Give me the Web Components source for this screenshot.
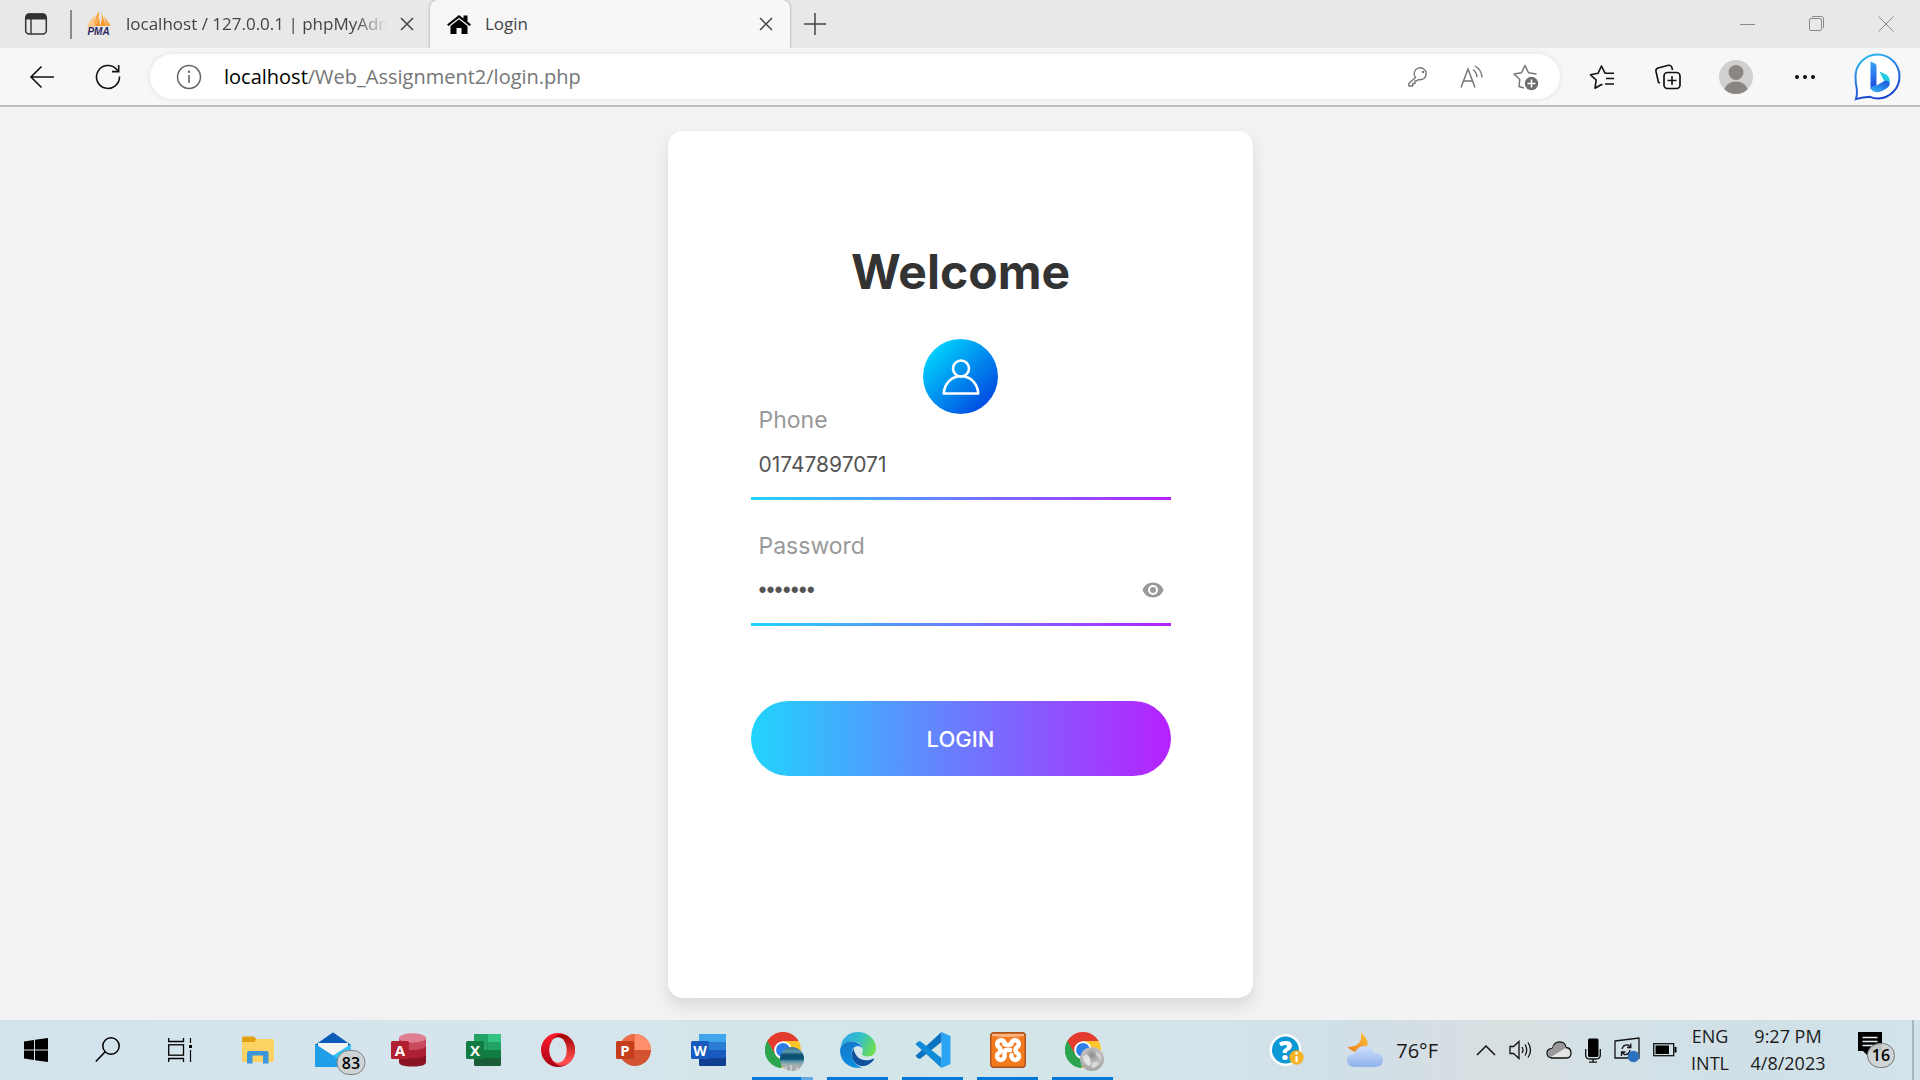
<!DOCTYPE html>
<html lang="en">
<head>
<meta charset="utf-8">
<title>Login</title>
<style>
  html, body { margin: 0; height: 100%; }
  body { font-family: "Open Sans", "Noto Sans", sans-serif; color: #1b1b1b; }
</style>
</head>
<body>
<desktop-screen></desktop-screen>

<script>
const define = (name, html) => {
  const tpl = document.createElement('template');
  tpl.innerHTML = html;
  customElements.define(name, class extends HTMLElement {
    constructor() {
      super();
      this.attachShadow({ mode: 'open' }).append(tpl.content.cloneNode(true));
    }
  });
};

/* ---------- icon set ---------- */
const icons = {
  panel: [24, 24, '<rect x="1.7" y="2" width="20.6" height="20" rx="3.5" fill="none" stroke="#333" stroke-width="1.5"/><path d="M1.5 7.5V5.5Q1.5 1.5 5.5 1.5H18.500Q22.500 1.500 22.500 5.500V7.500Z" fill="#333"/><path d="M7 7V22" stroke="#333" stroke-width="1.4"/>'],
  pma: [26, 26, '<path d="M8 16Q10 10 9 4Q3 10 1 16Z" fill="#fbc78a"/><path d="M9 15Q14 8 13 0Q9 5 8 15Z" fill="#fba94c"/><path d="M14 15Q17 8 15 0L20 15Z" fill="#f89c2e"/><path d="M18 5L25 15H20Z" fill="#f8a84a"/><path d="M9 15Q12 12 13 6L14 15Z" fill="#f78f1e"/><text x="12.500" y="24" text-anchor="middle" font-family="Liberation Sans,sans-serif" font-size="10" font-weight="700" font-style="italic" fill="#2c2a5e">PMA</text>'],
  x: [14, 14, '<path d="M1 1L13 13M13 1L1 13" stroke="#444" stroke-width="1.5"/>'],
  home: [24, 19, '<path d="M12 0L0 9.500L1.500 11L12 2.800L22.500 11L24 9.500L20.500 6.600V0.500H16.500V3.500Z" fill="#000"/><path d="M12 4.300L3.500 11V19H9.500V13H14.500V19H20.500V11Z" fill="#000"/>'],
  plus: [22, 22, '<path d="M11 0V22M0 11H22" stroke="#444" stroke-width="1.500"/>'],
  min: [16, 16, '<path d="M0 8.500H15" stroke="#8a8a8a" stroke-width="1"/>'],
  max: [16, 16, '<rect x="0.500" y="2.500" width="12" height="12" rx="1.500" fill="none" stroke="#8a8a8a"/><path d="M3 0.500H12.500Q14.500 0.500 14.500 2.500V12" fill="none" stroke="#8a8a8a"/>'],
  close: [16, 16, '<path d="M0.500 0.500L15.500 15.500M15.500 0.500L0.500 15.500" stroke="#8a8a8a"/>'],
  back: [26, 24, '<path d="M25 12H2M12.500 1.500L2 12L12.500 22.500" fill="none" stroke="#111" stroke-width="1.600"/>'],
  reload: [26, 26, '<path d="M24.500 12.500A11.500 11.500 0 1 1 21.500 5.200L23.500 7.500" fill="none" stroke="#111" stroke-width="1.600"/><path d="M23.700 1V7.600H17" fill="none" stroke="#111" stroke-width="1.600"/>'],
  info: [26, 26, '<circle cx="13" cy="13" r="11.500" fill="none" stroke="#666" stroke-width="1.500"/><path d="M13 11V19" stroke="#666" stroke-width="1.600"/><circle cx="13" cy="7.800" r="1.200" fill="#666"/>'],
  key: [20, 20, '<path d="M7.500 10.500A6 6 0 1 1 10.500 12.500L8.500 14H7V16.500H4.800V19H1.200Q0.800 19 0.800 18.500V16.500Z" fill="none" stroke="#767676" stroke-width="1.400" stroke-linejoin="round"/><circle cx="15" cy="5" r="1.200" fill="#767676"/>'],
  read: [24, 24, '<path d="M1 22.500L8 4L15 22.500M3.500 16H12.500" fill="none" stroke="#767676" stroke-width="1.500"/><path d="M13 4.500Q16.500 7 17 12M15 1Q21.500 4.500 22 12.500" fill="none" stroke="#767676" stroke-width="1.400"/>'],
  addstar: [26, 26, '<path d="M11 24L6 22.500L6.800 15.500L1 10L8.500 8.800L12 1.500L15.500 8.800L23.500 10" fill="none" stroke="#767676" stroke-width="1.500" stroke-linejoin="round"/><circle cx="18.500" cy="19.500" r="6.700" fill="#6e6e6e"/><path d="M18.500 15.500V23.500M14.500 19.500H22.500" stroke="#fff" stroke-width="1.500"/>'],
  favs: [26, 26, '<path d="M13.500 20.800L12.500 20.500L6 24.200L7.200 16L1.500 10.800L9 9.300L12.500 2L16 9.200H25" fill="none" stroke="#111" stroke-width="1.600" stroke-linejoin="round"/><path d="M17 14.500H25M16 20H25" stroke="#111" stroke-width="1.600"/>'],
  collect: [26, 26, '<path d="M5 19L3.500 18.500L1 7.500Q0.500 4.800 3 4L13.500 1.300Q16 0.800 16.800 3.200L17.500 6" fill="none" stroke="#111" stroke-width="1.600"/><rect x="9" y="8.500" width="16" height="16" rx="3.500" fill="#f7f7f7" stroke="#111" stroke-width="1.700"/><path d="M17 12V21M12.500 16.500H21.500" stroke="#111" stroke-width="1.600"/>'],
  person: [36, 36, '<clipPath id="c"><circle cx="18" cy="18" r="17"/></clipPath><circle cx="18" cy="18" r="17" fill="#d2d0ce"/><g clip-path="url(#c)" fill="#8a8683"><circle cx="18" cy="13.500" r="7.500"/><ellipse cx="18" cy="33" rx="12" ry="10.500"/></g>'],
  dots: [22, 6, '<g fill="#111"><circle cx="3" cy="3" r="2"/><circle cx="11" cy="3" r="2"/><circle cx="19" cy="3" r="2"/></g>'],
  bing: [48, 48, '<defs><linearGradient id="b1" x1="0" y1="0" x2=".4" y2="1"><stop offset="0" stop-color="#1fc6f0"/><stop offset=".5" stop-color="#2a80ea"/><stop offset="1" stop-color="#1a44cc"/></linearGradient><linearGradient id="b2" x1="0" y1="0" x2="0" y2="1"><stop offset="0" stop-color="#3aa5fb"/><stop offset="1" stop-color="#1c45dd"/></linearGradient><linearGradient id="b3" x1="0" y1="1" x2="1" y2="0"><stop offset="0" stop-color="#35b8f5"/><stop offset="1" stop-color="#1f4fe0"/></linearGradient></defs><path d="M2 46Q3.500 41.500 2.800 35.500Q1.500 31 1.500 23.500A22 22 0 1 1 24 45.500Q20 45.500 16 43.800Q9 44 2 46Z" fill="#fff" stroke="url(#b1)" stroke-width="2"/><path d="M16.500 8.500L21 10.500Q22.500 11.200 22.500 13V32.500L16.500 36.500Z" fill="url(#b2)"/><path d="M25.500 18.500L32 21.500Q37 24.500 35.500 31L29.500 27Z" fill="#22cde0"/><path d="M16.500 34L22.500 32.500L31 27.500Q36.500 28 35.500 32Q34.500 35 28 38Q22 40.500 18.500 37.800Q16.500 36.200 16.500 34Z" fill="url(#b3)"/>'],
  user: [38, 36, '<circle cx="19" cy="9.500" r="8" fill="none" stroke="#fff" stroke-width="2.600"/><path d="M1.800 34.500C2.200 25 9 17.300 19 17.300S35.800 25 36.200 34.500Z" fill="none" stroke="#fff" stroke-width="2.600" stroke-linejoin="round"/>'],
  eye: [22, 16, '<path d="M11 0.500C6 0.500 2 3.500 0.500 8C2 12.500 6 15.500 11 15.500S20 12.500 21.500 8C20 3.500 16 0.500 11 0.500Z" fill="#999"/><circle cx="11" cy="8" r="5" fill="#fff"/><circle cx="11" cy="8" r="3" fill="#999"/>'],
  win: [24, 24, '<path d="M0 3.500L10 2V11.500H0ZM11 1.800L24 0V11.500H11ZM0 12.500H10V22L0 20.500ZM11 12.500H24V24L11 22.200Z" fill="#000"/>'],
  search: [26, 26, '<circle cx="16" cy="9" r="8.200" fill="none" stroke="#000" stroke-width="1.500"/><path d="M10 15L0.800 24.500" stroke="#000" stroke-width="1.600"/>'],
  tasks: [24, 24, '<path d="M0.700 0V3.500H15.500V0M0.700 24V20.500H15.500V24" fill="none" stroke="#000" stroke-width="1.300"/><rect x="0.700" y="6.800" width="14.800" height="10.400" fill="none" stroke="#000" stroke-width="1.300"/><path d="M22.500 0V5M22.500 12V24" stroke="#000" stroke-width="1.200"/><rect x="21" y="7" width="3" height="3"/>'],
  files: [34, 30, '<path d="M1 3Q1 1.500 2.500 1.500H13L15.500 4.500V8H1Z" fill="#e0a010"/><path d="M1 7H13L16 4H31.500Q33 4 33 5.500V25Q33 27 31 27H3Q1 27 1 25Z" fill="#fcd264"/><path d="M6 28.500V18Q6 16 8 16H25.500Q27.500 16 27.500 18V28.500H22V20.500H11.500V28.500Z" fill="#3a96dd"/>'],
  mail: [38, 38, '<path d="M1 14L18 2Q19 1.200 20 2L37 14V20H1Z" fill="#0b5cb8"/><path d="M4 12H34V17L19 27L4 16Z" fill="#f4f4f4"/><path d="M1 13L19 25L1 36Z" fill="#1995de"/><path d="M37 13L1 36H37Z" fill="#35c1f1"/><path d="M1 13L37 36H1Z" fill="#1e9fe8"/><rect x="23" y="19.500" width="28" height="24" rx="12" fill="#cfd3d5" stroke="#7f8486"/><text x="37" y="37.500" text-anchor="middle" font-family="Open Sans,sans-serif" font-size="16" font-weight="600" fill="#000">83</text>'],
  access: [36, 36, '<path d="M9 6V30Q9 34.500 22.500 34.500T36 30V6Z" fill="#8a1323"/><path d="M9 6V24Q10 26 20 26.500Q34 26 36 23V6Z" fill="#ae2033"/><path d="M9 6V14Q10 18 22 18T36 14V6Z" fill="#c94a5e"/><ellipse cx="22.500" cy="6" rx="13.500" ry="4.700" fill="#e07f92"/><rect x="1" y="9" width="18" height="18" rx="1.500" fill="#b0202f"/><text x="10" y="23.500" text-anchor="middle" font-family="Open Sans,sans-serif" font-size="15" font-weight="700" fill="#fff">A</text>'],
  excel: [36, 36, '<rect x="9" y="2" width="27" height="32" rx="1.500" fill="#1a5c38"/><path d="M9 3.500Q9 2 10.500 2H22.500V10H9ZM9 10H22.500V18H9Z" fill="#21a366"/><path d="M22.500 2H34.500Q36 2 36 3.500V10H22.500Z" fill="#33c481"/><path d="M22.500 10H36V18H22.500Z" fill="#21a366"/><path d="M9 18H36V26H9Z" fill="#107c41"/><rect x="1" y="9" width="18" height="18" rx="1.500" fill="#107c41"/><text x="10" y="23.500" text-anchor="middle" font-family="Open Sans,sans-serif" font-size="15" font-weight="700" fill="#fff">X</text>'],
  opera: [36, 36, '<defs><linearGradient id="o1" x1="0" y1="0" x2="0" y2="1"><stop offset="0" stop-color="#ff1b2d"/><stop offset="1" stop-color="#a70014"/></linearGradient><linearGradient id="o2" x1="0" y1="0" x2="0" y2="1"><stop offset="0" stop-color="#9c0000"/><stop offset=".8" stop-color="#ff4b4b"/></linearGradient></defs><ellipse cx="18" cy="18" rx="17" ry="17" fill="url(#o1)"/><path d="M12 8Q19 -1 27.500 4Q35 9 35 18T27.500 32Q19 37 12 28Z" fill="url(#o2)"/><ellipse cx="18" cy="18" rx="8.800" ry="12.800" fill="#d6e5ec"/>'],
  ppt: [36, 36, '<circle cx="20" cy="18" r="16" fill="#d35230"/><path d="M20 2A16 16 0 0 0 4 18H20Z" fill="#ed6c47"/><path d="M20 2A16 16 0 0 1 36 18H20Z" fill="#ff8f6b"/><rect x="1" y="9" width="18" height="18" rx="1.500" fill="#c43e1c"/><text x="10" y="23.500" text-anchor="middle" font-family="Open Sans,sans-serif" font-size="15" font-weight="700" fill="#fff">P</text>'],
  word: [36, 36, '<rect x="9" y="2" width="27" height="32" rx="1.500" fill="#103f91"/><path d="M9 10V3.500Q9 2 10.500 2H34.500Q36 2 36 3.500V10Z" fill="#41a5ee"/><path d="M9 10H36V18H9Z" fill="#2b7cd3"/><path d="M9 18H36V26H9Z" fill="#185abd"/><rect x="1" y="9" width="18" height="18" rx="1.500" fill="#185abd"/><text x="10" y="23.500" text-anchor="middle" font-family="Open Sans,sans-serif" font-size="14" font-weight="700" fill="#fff">W</text>'],
  edge: [36, 36, '<defs><linearGradient id="e1" x1="0" y1=".3" x2="1" y2=".6"><stop offset="0" stop-color="#2fa6e6"/><stop offset=".5" stop-color="#33c1c9"/><stop offset="1" stop-color="#6fdf4a"/></linearGradient><linearGradient id="e2" x1="0" y1="0" x2=".4" y2="1"><stop offset="0" stop-color="#1577c9"/><stop offset="1" stop-color="#0d8ee0"/></linearGradient></defs><path d="M0.500 15C2 6 9 0 18 0C28 0 36 7 36 16C36 21 32.500 24.500 27.500 24.500C24 24.500 21.500 23 22 21.500C24 19 23.500 9.500 12 9.500C6 9.500 2 12 0.500 15Z" fill="url(#e1)"/><path d="M0.200 17C1.500 11.500 7 9 12.500 9.500C18.500 10 22 13.500 23 17Q21 14 17.500 14C12.500 14.500 10.500 20 12.500 26C14.500 31.500 18.500 35.500 23 35.200C10 38.500 -1 29 0.200 17Z" fill="url(#e2)"/><path d="M13.500 16.500C10.500 21 11.500 30 19 33.500C26 35.500 31 31.500 34 27.500Q34.300 26.200 33 26.700C25 30.500 15.500 27.500 13.500 16.500Z" fill="#1251a0"/>'],
  code: [36, 36, '<path d="M26.500 0L35.500 4V32L26.500 36Z" fill="#2aa5f5"/><path d="M26.500 0V10L5 27L2.500 26L0.500 23.800Z" fill="#0a72c0"/><path d="M26.500 36V26L5 9L2.500 10L0.500 12.200Z" fill="#118ad8"/>'],
  xampp: [36, 36, '<rect x="0.700" y="0.700" width="34.600" height="34.600" rx="3" fill="#f47a20" stroke="#a8531c" stroke-width="1.400"/><path d="M2 2H34V4Q18 6 2 4Z" fill="#fab483"/><g fill="none" stroke="#fff" stroke-width="4.500" stroke-linecap="round" stroke-linejoin="round"><path d="M14.500 12V10.500A3.800 3.800 0 1 0 9.500 15.500Q11.500 18 9.500 20.500A3.800 3.800 0 1 0 14.500 25V20.500Q14.500 18 17 18H20"/><path d="M14.500 12Q18 14 21.500 12V10.500A3.800 3.800 0 1 1 26.500 15.500Q24.500 18 26.500 20.500A3.800 3.800 0 1 1 21.500 25V23"/></g>'],
  help: [36, 34, '<circle cx="16.500" cy="17" r="16" fill="#fff"/><circle cx="16.500" cy="17" r="13.500" fill="#0c97d5"/><text x="16.500" y="26.500" text-anchor="middle" font-family="Open Sans,sans-serif" font-size="26" font-weight="800" fill="#fff">?</text><circle cx="27.500" cy="24.500" r="7.200" fill="#f5b325"/><path d="M27.500 23V29" stroke="#fff" stroke-width="2.200"/><circle cx="27.500" cy="20.300" r="1.300" fill="#fff"/>'],
  weather: [38, 36, '<defs><linearGradient id="w1" x1="0" y1="0" x2="0" y2="1"><stop offset="0" stop-color="#cfe0fb"/><stop offset="1" stop-color="#8fb2ea"/></linearGradient><linearGradient id="w2" x1="1" y1="0" x2="0" y2="1"><stop offset="0" stop-color="#f8c237"/><stop offset="1" stop-color="#ef7d22"/></linearGradient></defs><path d="M15 0.500Q26 10 18.500 18Q10 24 1.500 15Q17 15 15 0.500Z" fill="url(#w2)"/><path d="M7.500 35Q1 34 1 28T8.500 22Q11 14 18.500 14T28 21Q37 21 37 28T29.500 35Z" fill="url(#w1)"/>'],
  up: [20, 12, '<path d="M1 11L10 2L19 11" fill="none" stroke="#111" stroke-width="1.500"/>'],
  sound: [24, 20, '<path d="M1 6.500H4.500L10 1.500V18.500L4.500 13.500H1Z" fill="none" stroke="#111" stroke-width="1.300"/><path d="M13 7Q15 10 13 13M16 4.500Q19.500 10 16 15.500M19 2.500Q24 10 19 17.500" fill="none" stroke="#111" stroke-width="1.300"/>'],
  cloud: [26, 18, '<path d="M5.500 17Q1 16 1 12T6.500 7.500Q8 1 13.500 1T20 6.500Q25 7 25 12T20.500 17Z" fill="#e4e6e6" stroke="#111" stroke-width="1.300"/><path d="M2 13Q1 8.500 6.500 7.500Q8 1.700 13.500 1.700T19.500 7L5 16Q3 15.500 2 13Z" fill="#999"/>'],
  mic: [16, 25, '<rect x="3" y="0.500" width="10.500" height="18.500" rx="1.500" fill="#000"/><path d="M0.700 11V17Q0.700 21 5 21H11Q15.300 21 15.300 17V11M8 21V24M4 24.200H12" fill="none" stroke="#111" stroke-width="1.300"/>'],
  sync: [26, 26, '<path d="M1 4L25 1V21H1Z" fill="none" stroke="#111" stroke-width="1.300"/><path d="M8 12Q9.500 7.500 14 8L16.500 10M16.800 6.500V10.500H13M16 13Q15 18 10.500 17.500L8 15.500M7.500 19V15H11.500" fill="none" stroke="#111" stroke-width="1.300"/><circle cx="19.500" cy="19.500" r="5.800" fill="#2b71bd"/>'],
  battery: [24, 14, '<rect x="0.700" y="0.700" width="20" height="12" fill="none" stroke="#111" stroke-width="1.300"/><rect x="2.500" y="2.500" width="13.500" height="8.500"/><rect x="21.500" y="4" width="2" height="5.500"/>'],
  notes: [40, 38, '<path d="M1 1H25V20H11V25L6 20H1Z" fill="#000"/><path d="M5.500 6.500H20.500M5.500 10.500H20.500M5.500 14.500H16" stroke="#e6eef2" stroke-width="1.300"/><rect x="10.500" y="12.500" width="27" height="24" rx="12" fill="#cfd2d3" fill-opacity=".92" stroke="#777"/><text x="24" y="30" text-anchor="middle" font-family="Open Sans,sans-serif" font-size="16" font-weight="600" fill="#000">16</text>']
};
/* Chrome, with a round profile picture over its lower right corner */
const chrome = (profile) => [36, 36, '<clipPath id="k"><circle cx="18" cy="18" r="18"/></clipPath><g clip-path="url(#k)"><path d="M0 0H36V9H18L10 22L2 9Z" fill="#e33b2e"/><path d="M2.400 9L10.200 22.500L18 36H0V9Z" fill="#2da44e"/><path d="M18 9H36V36H16L26 22.500Z" fill="#fcc52a"/></g><path d="M18 9A9 9 0 0 0 9 18L10.200 22.500L2.400 9Q5 4 18 9Z" fill="#e33b2e"/><path d="M2.400 9L10.200 22.500A9 9 0 0 0 18 27L15 35.800A18 18 0 0 1 2.400 9Z" fill="#2da44e"/><circle cx="18" cy="18" r="8.800" fill="#fff"/><circle cx="18" cy="18" r="6.900" fill="#2f7de9"/>' + profile];
icons.chromeA = chrome('<clipPath id="p"><circle cx="27" cy="27" r="12"/></clipPath><linearGradient id="pg" x1="0" y1="0" x2="0" y2="1"><stop offset="0" stop-color="#3b6f84"/><stop offset=".2" stop-color="#5a9aae"/><stop offset=".33" stop-color="#0d4c70"/><stop offset=".5" stop-color="#0b5577"/><stop offset=".6" stop-color="#5f97a8"/><stop offset=".75" stop-color="#a3aeb2"/><stop offset="1" stop-color="#a8a8a8"/></linearGradient><g clip-path="url(#p)"><path d="M15 15H39V39H15Z" fill="url(#pg)"/><path d="M21 39V34M26 39V33M32 39V35" stroke="#d0d4d4" stroke-width="1.500"/></g>');
icons.chromeB = chrome('<radialGradient id="q" cx=".5" cy=".35" r=".6"><stop offset="0" stop-color="#8f8f8f"/><stop offset=".6" stop-color="#c2c2c2"/><stop offset="1" stop-color="#a6a6a6"/></radialGradient><circle cx="27" cy="27" r="12" fill="url(#q)"/><path d="M18 25Q22 20 24 25Q27 29 25 34Q19 33 18 25Z" fill="#e2e2e2"/><path d="M30 19Q36 22 36 27L32 24Z" fill="#d8d8d8"/><path d="M27 31Q31 29 34 31Q31 36 27 36Z" fill="#dadada"/>');

customElements.define('ui-icon', class extends HTMLElement {
  connectedCallback() {
    if (this.shadowRoot) return;
    const [w, h, body] = icons[this.getAttribute('name')];
    this.attachShadow({ mode: 'open' }).innerHTML =
      `<style>:host{display:block;flex:none}svg{display:block;overflow:visible}</style><svg width="${w}" height="${h}" viewBox="0 0 ${w} ${h}" aria-hidden="true">${body}</svg>`;
  }
});

customElements.define('icon-button', class extends HTMLElement {
  connectedCallback() {
    if (this.shadowRoot) return;
    this.attachShadow({ mode: 'open' }).innerHTML = `
      <style>
        :host { display: flex; flex: none; width: var(--cell, 54px); }
        button { all: unset; flex: 1; display: flex; align-items: center; justify-content: center; }
      </style>
      <button type="button" aria-label="${this.getAttribute('label')}"><ui-icon name="${this.getAttribute('icon')}"></ui-icon></button>`;
  }
});

/* ---------- browser ---------- */
define('browser-tab', `
  <style>
    :host { display: flex; align-items: center; box-sizing: border-box; height: 48px; font-size: 17px; color: #444; --cell: 24px; }
    .title { flex: 1; min-width: 0; overflow: hidden; white-space: nowrap; line-height: 28px; }
    :host([fade]) .title { -webkit-mask-image: linear-gradient(90deg, #000 88%, transparent); mask-image: linear-gradient(90deg, #000 88%, transparent); }
    :host([active]) { background: #f7f7f7; border-radius: 8px 8px 0 0; box-shadow: 0 0 3px #0005; }
    icon-button { margin-left: 8px; }
  </style>
  <slot name="icon"></slot>
  <div class="title"><slot></slot></div>
  <icon-button icon="x" label="Close tab"></icon-button>`);

define('tab-strip', `
  <style>
    :host { display: flex; align-items: stretch; height: 48px; background: #e8e8e8; overflow: hidden; }
    .panel { --cell: 72px; }
    .rule { width: 2px; margin: 10px 14px 9px -2px; background: #8a8a8a; }
    browser-tab.first { width: 333px; }
    browser-tab.first ui-icon { margin-right: 14px; }
    browser-tab.second { width: 360px; box-sizing: border-box; padding: 0 12px 0 17px; margin-left: 11px; }
    browser-tab.second ui-icon { margin-right: 14px; }
    .new { --cell: 50px; }
    .window { display: flex; margin-left: auto; --cell: 69px; }
  </style>
  <icon-button class="panel" icon="panel" label="Tab actions"></icon-button>
  <span class="rule"></span>
  <browser-tab class="first" fade><ui-icon slot="icon" name="pma"></ui-icon>localhost / 127.0.0.1 | phpMyAdmin</browser-tab>
  <browser-tab class="second" active><ui-icon slot="icon" name="home"></ui-icon>Login</browser-tab>
  <icon-button class="new" icon="plus" label="New tab"></icon-button>
  <div class="window">
    <icon-button icon="min" label="Minimize"></icon-button>
    <icon-button icon="max" label="Restore"></icon-button>
    <icon-button icon="close" label="Close"></icon-button>
  </div>`);

define('address-bar', `
  <style>
    :host { display: flex; align-items: center; height: 45px; background: #fff; border-radius: 23px; box-shadow: 0 0 6px #0000001a; padding: 0 7px 0 12px; }
    .url { flex: 1; margin-left: 8px; font-size: 20px; line-height: 30px; color: #767676; white-space: nowrap; }
    b { font-weight: 400; color: #000; }
  </style>
  <icon-button icon="info" label="Site information"></icon-button>
  <div class="url"><b>localhost</b>/Web_Assignment2/login.php</div>
  <icon-button icon="key" label="Saved passwords"></icon-button>
  <icon-button icon="read" label="Read aloud"></icon-button>
  <icon-button icon="addstar" label="Add to favorites"></icon-button>`);

define('tool-bar', `
  <style>
    :host { display: flex; align-items: center; height: 57px; background: #f7f7f7; border-bottom: 2px solid #bcbcbc; padding: 0 3px 0 9px; }
    .nav { --cell: 66px; }
    address-bar { flex: 1; margin: 0 9px; }
    .more { --cell: 69px; }
    .bing { --cell: 78px; }
  </style>
  <icon-button class="nav" icon="back" label="Back"></icon-button>
  <icon-button class="nav" icon="reload" label="Refresh"></icon-button>
  <address-bar></address-bar>
  <icon-button class="nav" icon="favs" label="Favorites"></icon-button>
  <icon-button class="nav" icon="collect" label="Collections"></icon-button>
  <icon-button class="more" icon="person" label="Profile"></icon-button>
  <icon-button class="more" icon="dots" label="Settings and more"></icon-button>
  <icon-button class="bing" icon="bing" label="Discover"></icon-button>`);

/* ---------- login page ---------- */
customElements.define('login-field', class extends HTMLElement {
  connectedCallback() {
    if (this.shadowRoot) return;
    const type = this.getAttribute('type');
    this.attachShadow({ mode: 'open' }).innerHTML = `
      <style>
        :host { display: block; font-size: 21px; }
        label { display: block; padding: 0 8px; line-height: 30px; color: #999; font-size: 23px; }
        .row { display: flex; align-items: center; height: 54px; padding: 2px 7px 6px 8px; }
        input { flex: 1; min-width: 0; height: 54px; border: 0; padding: 0; outline: 0; background: none; font: inherit; color: #555; }
        input[type=password] { font-family: "Liberation Sans", sans-serif; font-size: 23px; }
        .line { height: 3px; background: linear-gradient(90deg, #21d4fd, #b721ff); }
        icon-button { --cell: 22px; }
      </style>
      <label for="v">${this.getAttribute('label')}</label>
      <div class="row"><input id="v" type="${type}" value="${this.getAttribute('value')}">${type === 'password' ? '<icon-button icon="eye" label="Show password"></icon-button>' : ''}</div>
      <div class="line"></div>`;
  }
});

define('login-card', `
  <style>
    :host { display: block; box-sizing: border-box; width: 585px; max-width: 100%; background: #fff; border-radius: 15px; box-shadow: 0 8px 15px #0000001a; padding: 114px 82px 222px 83px; font-family: Inter, "Open Sans", sans-serif; }
    form { display: flex; flex-direction: column; align-items: stretch; }
    h1 { margin: 0; text-align: center; font-size: 48px; line-height: 54px; font-weight: 700; color: #333; }
    .avatar { align-self: center; display: flex; align-items: center; justify-content: center; width: 75px; height: 75px; margin: 40px 0 -9px; border-radius: 50%; background: linear-gradient(135deg, #00dbff 8%, #0040e0 92%); }
    login-field + login-field { margin-top: 31px; }
    button { height: 75px; margin-top: 75px; border: 0; border-radius: 38px; background: linear-gradient(90deg, #21d4fd, #b721ff); color: #fff; font: 500 22px/32px Inter, "Open Sans", sans-serif; }
  </style>
  <form>
    <h1>Welcome</h1>
    <div class="avatar"><ui-icon name="user"></ui-icon></div>
    <login-field label="Phone" type="text" value="01747897071"></login-field>
    <login-field label="Password" type="password" value="1234567"></login-field>
    <button type="button">LOGIN</button>
  </form>`);

/* ---------- taskbar ---------- */
customElements.define('task-app', class extends HTMLElement {
  connectedCallback() {
    if (this.shadowRoot) return;
    this.attachShadow({ mode: 'open' }).innerHTML = `
      <style>
        :host { display: flex; flex: none; width: 75px; box-sizing: border-box; padding: 0 7px; }
        button { all: unset; flex: 1; display: flex; align-items: center; justify-content: center; box-sizing: border-box; border-bottom: 3px solid transparent; border-top: 3px solid transparent; }
        :host([running]) button { border-bottom-color: #0078d7; }
        :host([many]) button { border-bottom: 0; padding-bottom: 3px; background: linear-gradient(90deg, #0078d7 80%, #62a9e4 80%) bottom / 100% 3px no-repeat; }
      </style>
      <button type="button" aria-label="${this.getAttribute('label')}"><ui-icon name="${this.getAttribute('icon')}"></ui-icon></button>`;
  }
});

define('system-tray', `
  <style>
    :host { display: flex; align-items: center; font-size: 18px; line-height: 27px; color: #1b1b1b; white-space: nowrap; text-align: center; }
    .temp { margin-left: 12px; font-size: 20px; }
    .weather { display: flex; align-items: center; margin: 0 38px 0 41px; }
    .small { display: flex; align-items: center; gap: 13px; margin-right: 9px; }
    .lang { width: 48px; }
    .clock { width: 108px; }
    .notes { --cell: 70px; }
    .end { align-self: stretch; width: 2px; margin: 0 6px 0 0; background: #a9b4bc; }
  </style>
  <ui-icon name="help"></ui-icon>
  <div class="weather"><ui-icon name="weather"></ui-icon><span class="temp">76°F</span></div>
  <div class="small">
    <ui-icon name="up"></ui-icon><ui-icon name="sound"></ui-icon><ui-icon name="cloud"></ui-icon>
    <ui-icon name="mic"></ui-icon><ui-icon name="sync"></ui-icon><ui-icon name="battery"></ui-icon>
  </div>
  <div class="lang">ENG<br>INTL</div>
  <div class="clock">9:27 PM<br>4/8/2023</div>
  <icon-button class="notes" icon="notes" label="Notifications"></icon-button>
  <span class="end"></span>`);

define('task-bar', `
  <style>
    :host { display: flex; height: 60px; background: linear-gradient(90deg, #d3e3ec, #d6e5ec 30%, #d2e6e8 47%, #d5e4ea 62%, #d1dfe8 70%, #d8dfe0 79%, #d3e1e7 84%, #d0e0e7 92%, #d3e3eb); }
    .sys { display: flex; --cell: 72px; margin-right: 4px; }
    system-tray { margin-left: auto; }
  </style>
  <div class="sys">
    <icon-button icon="win" label="Start"></icon-button>
    <icon-button icon="search" label="Search"></icon-button>
    <icon-button icon="tasks" label="Task view"></icon-button>
  </div>
  <task-app icon="files" label="File Explorer"></task-app>
  <task-app icon="mail" label="Mail"></task-app>
  <task-app icon="access" label="Access"></task-app>
  <task-app icon="excel" label="Excel"></task-app>
  <task-app icon="opera" label="Opera"></task-app>
  <task-app icon="ppt" label="PowerPoint"></task-app>
  <task-app icon="word" label="Word"></task-app>
  <task-app icon="chromeA" label="Chrome" many></task-app>
  <task-app icon="edge" label="Edge" running></task-app>
  <task-app icon="code" label="Visual Studio Code" running></task-app>
  <task-app icon="xampp" label="XAMPP" running></task-app>
  <task-app icon="chromeB" label="Chrome" running></task-app>
  <system-tray></system-tray>`);

define('desktop-screen', `
  <style>
    :host { display: flex; flex-direction: column; min-height: 100vh; }
    main { flex: 1; display: flex; justify-content: center; align-items: flex-start; padding: 24px 0 22px; background: #f2f2f2; }
    tab-strip, tool-bar, task-bar { flex: none; }
  </style>
  <tab-strip></tab-strip>
  <tool-bar></tool-bar>
  <main><login-card></login-card></main>
  <task-bar></task-bar>`);
</script>
</body>
</html>
